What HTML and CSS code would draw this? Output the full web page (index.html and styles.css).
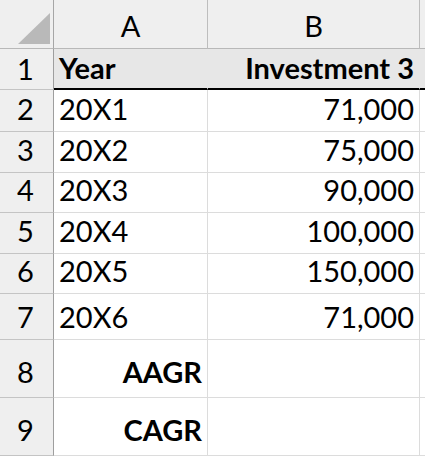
FILE: index.html
```html
<!DOCTYPE html>
<html>
<head>
<meta charset="utf-8">
<link rel="stylesheet" href="styles.css">
</head>
<body>
<div class="sheet">
  <div class="corner"><span class="tri"></span></div>
  <div class="colhead">A</div>
  <div class="colhead">B</div>
  <div class="colhead rest"></div>

  <div class="rowhead top">1</div>
  <div class="cell first bold">Year</div>
  <div class="cell first bold num">Investment 3</div>
  <div class="cell first rest"></div>

  <div class="rowhead">2</div>
  <div class="cell">20X1</div>
  <div class="cell num">71,000</div>
  <div class="cell rest"></div>

  <div class="rowhead">3</div>
  <div class="cell">20X2</div>
  <div class="cell num">75,000</div>
  <div class="cell rest"></div>

  <div class="rowhead">4</div>
  <div class="cell">20X3</div>
  <div class="cell num">90,000</div>
  <div class="cell rest"></div>

  <div class="rowhead">5</div>
  <div class="cell">20X4</div>
  <div class="cell num">100,000</div>
  <div class="cell rest"></div>

  <div class="rowhead">6</div>
  <div class="cell">20X5</div>
  <div class="cell num">150,000</div>
  <div class="cell rest"></div>

  <div class="rowhead">7</div>
  <div class="cell">20X6</div>
  <div class="cell num">71,000</div>
  <div class="cell rest"></div>

  <div class="rowhead tall">8</div>
  <div class="cell tall bold num">AAGR</div>
  <div class="cell tall num"></div>
  <div class="cell tall rest"></div>

  <div class="rowhead tall">9</div>
  <div class="cell tall bold num">CAGR</div>
  <div class="cell tall num"></div>
  <div class="cell tall rest"></div>
</div>
</body>
</html>
```
FILE: styles.css
```css
html, body {
  margin: 0;
  padding: 0;
  background: #ffffff;
}

.sheet {
  display: grid;
  grid-template-columns: 54px 154px 212px 1fr;
  grid-template-rows: 49px 41px 42px 41px 40px 41px 40px 46px 58px 58px;
  font-family: "Lato", "Liberation Sans", sans-serif;
  font-size: 29px;
  color: #000;
  width: 425px;
  height: 460px;
  overflow: hidden;
}

.sheet > div {
  box-sizing: border-box;
  display: flex;
  align-items: flex-end;
  line-height: 1;
  white-space: nowrap;
}

.corner {
  background: #efefef;
  border-right: 1px solid #a6a6a6;
  border-bottom: 1px solid #b8b8b8;
  position: relative;
}

.tri {
  position: absolute;
  left: 18px;
  top: 13px;
  width: 32px;
  height: 31px;
  background: #b9b9b9;
  clip-path: polygon(100% 0, 100% 100%, 0 100%);
}

.colhead {
  background: #efefef;
  border-right: 1px solid #bdbdbd;
  border-bottom: 1px solid #b8b8b8;
  justify-content: center;
  padding-bottom: 8px;
}

.colhead.rest {
  border-right: none;
}

.rowhead {
  background: #efefef;
  border-right: 1px solid #9e9e9e;
  border-bottom: 1px solid #c4c4c4;
  justify-content: center;
  padding-bottom: 8px;
  padding-right: 2px;
}

.rowhead.top {
  padding-bottom: 6px;
}

.cell {
  background: #ffffff;
  border-right: 1px solid #dcdcdc;
  border-bottom: 1px solid #dcdcdc;
  padding: 0 5px 8px 5px;
}

.rowhead.tall,
.cell.tall {
  padding-bottom: 11px;
}

.cell.first {
  background: #e7e7e7;
  border-bottom: 2px solid #000;
  border-right-color: #e7e7e7;
  padding-bottom: 6px;
}

.cell.rest {
  border-right: none;
}

.num {
  justify-content: flex-end;
}

.bold {
  font-weight: 700;
}
```
